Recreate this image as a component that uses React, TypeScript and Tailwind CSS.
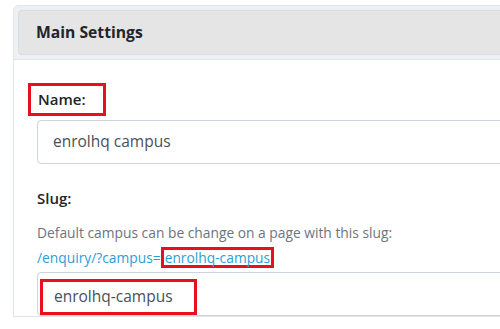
export default function App() {
  return (
    <div
      className="h-[329px] w-[500px] overflow-hidden bg-white pl-[13px] pt-[5px]"
      style={{ fontFamily: "'Open Sans', 'Noto Sans', sans-serif" }}
    >
      <div className="w-[540px] rounded-t-[5px] border border-[#dfe5ea]">
        {/* header */}
        <div className="border-b border-[#dfe5ea] bg-[#eef1f3] p-[4px] pr-0">
          <div className="flex h-[45px] items-center rounded-l-[4px] border border-r-0 border-[#dcdcdc] bg-[#e5e5e5] pl-[17px]">
            <h2 className="text-[15.7px] font-bold text-[#212529]">Main Settings</h2>
          </div>
        </div>

        {/* body */}
        <div className="pl-[23px] pt-[23px]">
          <label className="ml-[-9px] block w-fit border-[3px] border-[#e8101e] py-[2px] pl-[7px] pr-[17px] text-[15px] font-semibold leading-[23px] text-[#212529]">
            Name:
          </label>

          <div className="mt-[4px] flex h-[44px] items-center rounded-[4px] border border-[#ced4da] pl-[15px] text-[15.5px] text-[#495057]">
            enrolhq campus
          </div>

          <label className="mt-[23px] block text-[15px] font-semibold leading-[22px] text-[#212529]">
            Slug:
          </label>

          <p className="mt-[14px] text-[13.8px] leading-[20px] text-[#6c757d]">
            Default campus can be change on a page with this slug:
          </p>
          <p className="mt-[4px] flex items-center text-[13.8px] leading-[21px] text-[#2a9fd6]">
            /enquiry/?campus=
            <span className="inline-block border-[3px] border-[#e8101e] px-[1px] leading-[15px]">
              enrolhq-campus
            </span>
          </p>

          <div className="mt-[4px] flex h-[44px] items-start rounded-[4px] border border-[#ced4da] pl-[2px] pt-[6px]">
            <span className="inline-block h-[36px] w-[157px] border-[3px] border-[#e8101e] pl-[11px] text-[15.5px] leading-[29px] text-[#495057]">
              enrolhq-campus
            </span>
          </div>
        </div>
      </div>
    </div>
  );
}
